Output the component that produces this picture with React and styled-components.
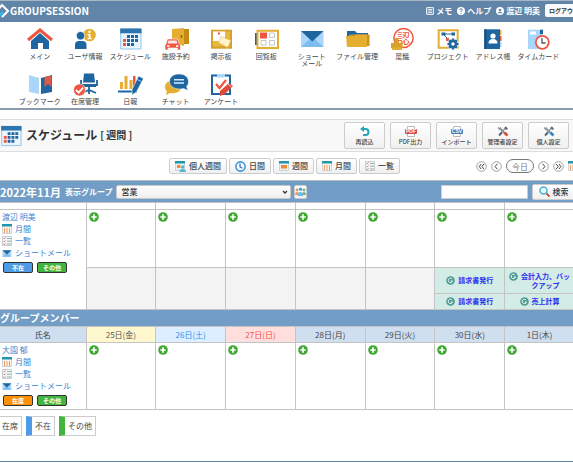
import React from "react";
import styled, { createGlobalStyle } from "styled-components";

const GlobalStyle = createGlobalStyle`
  *, *::before, *::after { box-sizing: border-box; }
  html, body { margin: 0; background: #fff; }
  body {
    overflow-x: hidden;
    color: #444;
    font-family: "Noto Sans CJK JP", "Noto Sans", sans-serif;
    font-size: 8px;
    line-height: 12px;
  }
  button, input, select { font: inherit; color: inherit; margin: 0; }
  a { text-decoration: none; color: inherit; }
  svg { display: block; flex: none; }
  h1, h2, ul { margin: 0; padding: 0; font-size: inherit; list-style: none; }
`;

const Page = styled.div`
  overflow: hidden;
  border-bottom: 1px solid #6185a8;
`;

const TopBar = styled.header`
  display: flex;
  align-items: center;
  height: 22px;
  padding: 0 4px 2px 0;
  background: #6185a8;
  border-top: 1px solid #a9b7c5;
  color: #fff;
  overflow: hidden;
`;

const Brand = styled.a`
  display: flex;
  align-items: center;
  gap: 1px;
  font-size: 10px;
  font-weight: bold;
`;

const TopLinks = styled.nav`
  display: flex;
  align-items: center;
  gap: 5px;
  margin-left: auto;
  margin-right: -14px;
  font-weight: bold;
  white-space: nowrap;
`;

const TopLink = styled.a`
  display: flex;
  align-items: center;
  gap: 2px;
`;

const Logout = styled.button`
  height: 13px;
  padding: 0 4px;
  border: 0;
  border-radius: 2px;
  background: #fafafa;
  color: #333;
  font-size: 6px;
  font-weight: bold;
`;

const Menu = styled.nav`
  display: grid;
  grid-template-columns: repeat(12, 1fr);
  grid-auto-rows: 45px;
  height: 88px;
  padding: 5px 12px 0 17px;
  border-bottom: 2px solid #8c9bab;
`;

const MenuItem = styled.a`
  display: flex;
  flex-direction: column;
  align-items: center;
  gap: 2px;
  font-size: 7px;
  line-height: 7px;
  text-align: center;
  white-space: pre;
`;

const TitleBar = styled.div`
  display: flex;
  align-items: center;
  gap: 4px;
  margin-top: 9px;
  height: 33px;
  padding-right: 4px;
  background: #f8f8f8;
  border: solid #ddd;
  border-width: 1px 0;
`;

const Title = styled.h1`
  display: flex;
  align-items: center;
  gap: 3px;
  padding-bottom: 2px;
  color: #333;
  font-size: 12px;
  line-height: 18px;
  font-weight: bold;
`;

const TitleNote = styled.small`
  font-size: 10px;
`;

const Tools = styled.div`
  display: flex;
  gap: 5px;
  margin-left: auto;
`;

const RaisedButton = styled.button`
  display: flex;
  align-items: center;
  justify-content: center;
  border: 1px solid #ccc;
  border-radius: 2px;
  background: linear-gradient(#fff, #f0f0f0);
  white-space: nowrap;
`;

const ToolButton = styled(RaisedButton)`
  flex-direction: column;
  gap: 1px;
  width: 41px;
  height: 27px;
  padding: 0;
  font-size: 6px;
  line-height: 8px;
  font-weight: 500;
`;

const ViewRow = styled.div`
  display: grid;
  grid-template-columns: 1fr auto 1fr;
  align-items: center;
  height: 28px;
  padding-right: 4px;
`;

const Views = styled.div`
  display: flex;
  grid-column: 2;
  gap: 2px;
`;

const ViewButton = styled(RaisedButton)`
  gap: 3px;
  height: 16px;
  padding: 0 5px;
  font-weight: 500;
`;

const Pager = styled.div`
  display: flex;
  align-items: center;
  justify-content: flex-end;
  gap: 4px;
  margin-right: -9px;
`;

const PlainButton = styled.button`
  display: flex;
  padding: 0;
  border: 0;
  background: none;
`;

const Today = styled.button`
  height: 14px;
  padding: 0 5px;
  border: 1px solid #777;
  border-radius: 7px;
  background: #fff;
  color: #777;
  line-height: 11px;
`;

const FilterBar = styled.div`
  display: flex;
  align-items: center;
  gap: 3px;
  height: 22px;
  background: #729dc6;
  border-top: 1px solid #b5bdc5;
  color: #fff;
  font-weight: bold;
  white-space: nowrap;
`;

const Heading = styled.h2`
  font-size: ${(p) => p.$size}px;
  line-height: 16px;
`;

const FilterLabel = styled.label`
  margin-left: 1px;
`;

const SelectBox = styled.div`
  display: grid;
  align-items: center;
  width: 175px;
  margin-left: 1px;
  svg { grid-area: 1 / 1; justify-self: end; margin-right: 3px; pointer-events: none; }
`;

const Select = styled.select`
  grid-area: 1 / 1;
  appearance: none;
  width: 100%;
  height: 14px;
  padding: 0 4px;
  border: 1px solid #c9c9c9;
  border-radius: 2px;
  background: linear-gradient(#fff, #eee);
  color: #333;
  font-size: 8px;
  line-height: 11px;
  font-weight: 500;
`;

const IconButton = styled(RaisedButton)`
  width: 13px;
  height: 14px;
  padding: 0;
`;

const SearchForm = styled.form`
  display: flex;
  align-items: center;
  gap: 4px;
  margin-left: auto;
  margin-right: -2px;
`;

const SearchInput = styled.input`
  width: 87px;
  height: 14px;
  padding: 0 3px;
  border: 1px solid #ccc;
  background: #fff;
  color: #333;
`;

const SearchButton = styled(RaisedButton)`
  gap: 3px;
  width: 43px;
  height: 16px;
  padding: 0;
  color: #333;
  font-weight: 500;
`;

const TableWrap = styled.div`
  margin-right: -2px;
`;

const Table = styled.table`
  width: 100%;
  table-layout: fixed;
  border-collapse: collapse;
`;

const NameCol = styled.col`
  width: 86px;
`;

const Cell = styled.td`
  height: ${(p) => p.$h}px;
  padding: ${(p) => (p.$h > 20 ? "2px" : "0")};
  border: 1px solid #c4c4c4;
  border-left-color: #d0d0d0;
  background: ${(p) => p.$bg || "#fff"};
  vertical-align: top;
  &:first-child { border-left: 0; }
`;

const NameCell = styled(Cell)`
  padding: 1px 2px;
`;

const EventCell = styled(Cell)`
  padding: 0;
  vertical-align: middle;
  background: #d3ece6;
`;

const GroupCell = styled.td`
  height: 17px;
  padding: 0;
  background: #729dc6;
  color: #fff;
`;

const dayTones = {
  week: ["#cfdff0", "#444"],
  fri: ["#fff8cf", "#555"],
  sat: ["#dceeff", "#2f8df2"],
  sun: ["#ffdede", "#f25050"],
};

const DayHead = styled.th`
  height: 16px;
  padding: 0;
  border: 1px solid #c4c4c4;
  background: ${(p) => dayTones[p.$tone][0]};
  color: ${(p) => dayTones[p.$tone][1]};
  font-weight: normal;
  &:first-child { border-left: 0; }
`;

const Person = styled.ul`
  color: #3a7fd0;
`;

const PersonLink = styled.a`
  display: flex;
  align-items: center;
  gap: 3px;
  height: 12px;
  white-space: nowrap;
`;

const Badges = styled.div`
  display: flex;
  gap: 4px;
  padding: 3px 1px 0;
`;

const Badge = styled.button`
  width: 30px;
  height: 11px;
  padding: 0;
  border: 1px solid #333;
  border-radius: 2px;
  background: ${(p) => p.$color};
  color: #fff;
  font-size: 6px;
  line-height: 8px;
  font-weight: bold;
`;

const EventLink = styled.a`
  display: flex;
  justify-content: center;
  align-items: flex-start;
  gap: 3px;
  color: #2a2af0;
  font-size: 7px;
  line-height: 9px;
  font-weight: bold;
  text-align: center;
  white-space: pre;
`;

const Legend = styled.ul`
  display: flex;
  gap: 4px;
  margin-top: 6px;
  margin-left: -7px;
  padding-bottom: 25px;
`;

const LegendItem = styled.li`
  display: flex;
  align-items: center;
  height: 20px;
  padding: 0 3px;
  border: 1px solid #ccc;
  border-left: 6px solid ${(p) => p.$color};
`;

const Art = ({ w = 26, h = 24, box, children }) => (
  <svg width={w} height={h} viewBox={box || `0 0 ${w} ${h}`} fill="none" aria-hidden="true">
    {children}
  </svg>
);

const BLUE = "#1f659f";
const LIGHT = "#a9d6fa";
const GOLD = "#e5ae30";
const RED = "#ef5541";

const HomeArt = () => (
  <Art>
    <path d="M4 14 13 6l9 8v8h-6v-6h-5v6H4z" fill={BLUE} />
    <path d="M1 13 13 3l12 10" stroke={RED} strokeWidth="3" />
  </Art>
);
const UserArt = () => (
  <Art>
    <circle cx="17.5" cy="8" r="6.3" fill={GOLD} />
    <circle cx="17.5" cy="4.7" r="1.2" fill="#fff" />
    <path d="M15.5 7h3v4h1.2v1.3h-4.2V11h1.2V8.3h-1.2z" fill="#fff" />
    <circle cx="8.5" cy="8.7" r="4.2" fill={BLUE} stroke="#fff" strokeWidth=".7" />
    <path d="M3 22v-4q0-4 4-4h3.500q4 0 4 4v4z" fill={BLUE} />
  </Art>
);
const CalendarArt = ({ w = 26, h = 24 }) => (
  <Art w={w} h={h} box={w === 26 ? "0 0 26 24" : "2 1 23 22"}>
    <path d="M3.700 2h20.300v20H3.700z" fill="#eaf5fe" stroke="#8fc5ef" />
    <path d="M3.200 1.500h21.300v4.800H3.200z" fill="#2d76ad" />
    <path d="M10 8h3v3h-3zm4 0h3v3h-3zm4 0h3v3h-3zm-8 4h3v3h-3zm4 0h3v3h-3zm4 0h3v3h-3zm-8 4h3v3h-3zm4 0h3v3h-3z" fill={BLUE} />
    <path d="M6 12h3v3H6zm0 4h3v3H6z" fill={RED} />
  </Art>
);
const FacilityArt = () => (
  <Art>
    <path d="M9 2h17v15H9z" fill="#c58b14" />
    <path d="M9 2l12-1v18L9 16z" fill={GOLD} />
    <path d="M18.500 8v3" stroke="#8a6415" strokeWidth="1.500" />
    <path d="M4.500 12h10l2 5 1 1v5h-3v-2H5v2H2v-5l1-1z" fill={RED} stroke="#fff" strokeWidth=".6" />
    <path d="M5.500 13.500h8l1 3h-10z" fill="#fde5e1" />
    <path d="M4 19h2.500m6.500 0h2.500" stroke="#fff" strokeWidth="1.300" />
  </Art>
);
const BoardArt = () => (
  <Art>
    <path d="M3 2.700h21v19H3z" fill="#d6a02b" />
    <path d="M5 4.500h17v15H5z" fill="#e9b93f" />
    <path d="M5 4.500h12v9.500H5z" fill="#fff" />
    <path d="m13 9.500 10 4-3.500 7-9-5z" fill="#fff5cc" stroke="#dcb352" strokeWidth=".5" />
    <path d="M10 5.500h2v2h-2z" fill={RED} />
  </Art>
);
const CircularArt = () => (
  <Art>
    <path d="M2 6h3v12H2z" fill={BLUE} />
    <path d="M4.500 3.700h20.500v17.300H4.500z" fill="#fff" stroke={GOLD} strokeWidth="2" />
    <path d="M7 5.500h7v6H7z" fill={RED} />
    <path d="M16.500 6h5v4.500h-5zm-8.500 7.500h5v4.500H8zm8.500 0h5v4.500h-5z" stroke="#c8c8c8" />
  </Art>
);
const MailArt = ({ w = 26, h = 24 }) => (
  <Art w={w} h={h} box={w === 26 ? "0 0 26 24" : "1 1 25 22"}>
    <path d="M2 4h22.500v16H2z" fill={LIGHT} />
    <path d="m2 20 9-8h4.500l9 8z" fill="#7dbdee" />
    <path d="M2 4h22.500L13.300 14.500z" fill={BLUE} />
  </Art>
);
const FolderArt = () => (
  <Art>
    <path d="M3 4h8l2 2h11v10H3z" fill={BLUE} />
    <path d="M5 7.500h20.500V19H5z" fill="#c79322" />
    <path d="M2 9h8l2-1.500h11V20H3z" fill={GOLD} />
  </Art>
);
const SealArt = () => (
  <Art>
    <circle cx="14.500" cy="11" r="9.600" stroke={RED} strokeWidth="1.500" />
    <text x="14.500" y="15.500" textAnchor="middle" fontSize="13" fill={RED}>認</text>
    <path d="M5.500 11h4v5h4v5H2v-5h3.500z" fill="#d9a126" />
    <path d="M3 20.500h10v2.500H3z" fill={GOLD} />
  </Art>
);
const gearTeeth = [0, 45, 90, 135];
const ProjectArt = () => (
  <Art>
    <path d="M3.700 3.300h19v17.500h-19z" fill="#fff" stroke={GOLD} strokeWidth="2" />
    <path d="M8 7h10M8 7l6 6" stroke={BLUE} />
    <path d="M6.500 5.500h4v3h-4zm10 0h3.500v3h-3.500z" fill={BLUE} />
    <path d="M11 11h3v3h-3z" fill={RED} />
    <circle cx="18" cy="17" r="6" fill="#fff" />
    {gearTeeth.map((a) => (
      <path key={a} d="M16.700 11.500h2.600v11h-2.600z" fill={BLUE} transform={`rotate(${a} 18 17)`} />
    ))}
    <circle cx="18" cy="17" r="4" fill={BLUE} />
    <circle cx="18" cy="17" r="1.700" fill="#fff" />
  </Art>
);
const AddressArt = () => (
  <Art>
    <path d="M19 3h2.500v5H19z" fill={GOLD} />
    <path d="M19 9h2.500v5H19z" fill={RED} />
    <path d="M19 15h2.500v5H19z" fill={LIGHT} />
    <path d="M4.300 2.300h15.700V22H4.300z" fill={BLUE} />
    <path d="M4.300 2.300h2V22h-2z" fill="#174f80" />
    <circle cx="13" cy="9" r="2.600" fill="#fff" />
    <path d="M8.500 16.500q0-4.500 4.500-4.500t4.500 4.500z" fill="#fff" />
  </Art>
);
const TimecardArt = () => (
  <Art>
    <path d="M3 2.700h15V22H3z" fill={LIGHT} />
    <path d="M5 4.500h6v3H5z" fill="#fff" />
    <path d="M15 2.700h3V7h-3z" fill={BLUE} />
    <circle cx="17.300" cy="15.300" r="6.500" fill="#fff" stroke={RED} strokeWidth="1.800" />
    <path d="M17 11v5h3.500" stroke="#555" strokeWidth="1.300" />
  </Art>
);
const BookmarkArt = () => (
  <Art>
    <path d="m2 3 10 3v16L2 20z" fill={LIGHT} />
    <path d="m25 3-11 3v16l11-2z" fill={BLUE} />
    <path d="m17.500 5 7-1.500V15l-3.500-3-3.500 3z" fill="#df5b49" />
  </Art>
);
const ChairArt = () => (
  <Art>
    <path d="M12 1.500h10l1 9H11z" fill={BLUE} />
    <path d="M9 8v5h16V8M10 14h14" stroke={BLUE} strokeWidth="1.800" />
    <path d="M17 14v8M10 21l7-3 7 3" stroke={BLUE} strokeWidth="1.800" />
    <circle cx="7.500" cy="18" r="6" fill={RED} stroke="#fff" strokeWidth=".6" />
    <path d="m4 18 2.700 2.700 4.500-5" stroke="#fff" strokeWidth="1.800" />
  </Art>
);
const ReportArt = () => (
  <Art>
    <path d="M3 10h3v7H3zm4.500-6h3v13h-3zm5 4h3v9h-3z" fill={GOLD} />
    <path d="M16 4h2.500v13H16z" fill={RED} />
    <path d="M1 19.500h19" stroke={BLUE} strokeWidth="2" />
    <path d="m21.500 4 5 2.500-7 13.500-4.500 3v-5.500z" fill={BLUE} stroke="#fff" strokeWidth=".6" />
    <path d="m20 7.500 4.500 2" stroke="#9ccaf0" />
  </Art>
);
const ChatArt = () => (
  <Art>
    <path d="M9 9c-5 0-7 3-7 6 0 2 1 4 2 4l-1 4 4-2c7 1 11-2 11-6z" fill={GOLD} />
    <path d="M16 2c6 0 9.500 3.500 9.500 7.500 0 2.500-1 4-2 5l1.500 4-4.500-2c-8 2-14-2-14-7S11 2 16 2z" fill={BLUE} stroke="#fff" strokeWidth=".5" />
    <path d="M11 7.700h10M11 11h10" stroke="#d8ecff" strokeWidth="1.500" />
  </Art>
);
const SurveyArt = () => (
  <Art>
    <path d="M4 3.500h18V22H4z" fill="#fff" stroke={BLUE} strokeWidth="2" />
    <path d="M9 2h8v3.500H9z" fill={LIGHT} />
    <path d="m8 12 3.500 4L18 8" stroke={RED} strokeWidth="2.200" />
    <path d="m12 19 9-8 4 3-8 8-5 2z" fill="#e04b38" />
    <path d="m20 12 3.500 3" stroke="#fff" strokeWidth=".7" />
  </Art>
);

const menu = [
  ["メイン", HomeArt], ["ユーザ情報", UserArt], ["スケジュール", CalendarArt],
  ["施設予約", FacilityArt], ["掲示板", BoardArt], ["回覧板", CircularArt],
  ["ショート\nメール", MailArt], ["ファイル管理", FolderArt], ["稟議", SealArt],
  ["プロジェクト", ProjectArt], ["アドレス帳", AddressArt], ["タイムカード", TimecardArt],
  ["ブックマーク", BookmarkArt], ["在席管理", ChairArt], ["日報", ReportArt],
  ["チャット", ChatArt], ["アンケート", SurveyArt],
];

const ReloadArt = () => (
  <Art w={12} h={11}>
    <path d="M3.500 3h3a3 3 0 0 1 0 6H4" stroke="#26a5b8" strokeWidth="2" />
    <path d="M1 3 5 0v6z" fill="#26a5b8" />
  </Art>
);
const DocArt = ({ color, label }) => (
  <Art w={12} h={11}>
    <path d="M2.500.5h7v10h-7z" fill="#fff" stroke="#bbb" />
    <rect y="3" width="12" height="5" rx="1" fill={color} />
    <text x="6" y="7.200" textAnchor="middle" fontSize="5" fontWeight="bold" fontFamily="Liberation Sans, sans-serif" fill="#fff">{label}</text>
  </Art>
);
const WrenchArt = ({ accent }) => (
  <Art w={12} h={11}>
    <path d="M3 2.500 9.500 9" stroke="#8a949e" strokeWidth="1.800" />
    <path d="M1 1.500 2.500 3 4 1.500M9.500 1 3 8" stroke="#8a949e" strokeWidth="1.500" />
    <path d="M7 2 9 .5 11 3 9.500 4z" fill="#667" />
    <path d="m2 9.500 3-3" stroke="#567" strokeWidth="2" />
    <path d="m7.500 6.500 3 3" stroke={accent} strokeWidth="2.500" />
  </Art>
);

const tools = [
  ["再読込", <ReloadArt />],
  ["PDF出力", <DocArt color="#d9434a" label="PDF" />],
  ["インポート", <DocArt color="#3f7dbb" label="CSV" />],
  ["管理者設定", <WrenchArt accent="#e5482d" />],
  ["個人設定", <WrenchArt accent="#2d87d8" />],
];

const MonthArt = () => (
  <Art w={10} h={10}>
    <path d="M.5.500h9v9h-9z" fill="#fff5ec" stroke="#c9d5db" />
    <path d="M0 0h10v2.500H0z" fill="#2296ad" />
    <path d="M2.500 4v5M5 4v5M7.500 4v5" stroke="#ee9c62" />
  </Art>
);
const WeekArt = () => (
  <Art w={10} h={10}>
    <path d="M.5.500h9v9h-9z" fill="#e8f2f6" stroke="#c9d5db" />
    <path d="M0 0h10v2.500H0z" fill="#2296ad" />
    <path d="M2 4h6v3.500H2z" fill="#f28a35" />
  </Art>
);
const PersonWeekArt = () => (
  <Art w={11} h={11}>
    <path d="M.5.500h9v9h-9z" fill="#e8f2f6" stroke="#c9d5db" />
    <path d="M0 0h10v2.500H0z" fill="#2296ad" />
    <path d="M2 4h3.500v3H2z" fill="#f28a35" />
    <circle cx="7.700" cy="6" r="1.700" fill="#56b3d3" />
    <path d="M4.500 11q0-3 3.200-3T11 11z" fill="#56b3d3" />
  </Art>
);
const ClockArt = () => (
  <Art w={11} h={11}>
    <circle cx="5.500" cy="5.500" r="4.600" fill="#fff" stroke="#3d93e0" strokeWidth="1.600" />
    <path d="M5 2.500v3.300l2.300 1.500" stroke="#3d6a9a" strokeWidth="1.200" />
  </Art>
);
const ListArt = () => (
  <Art w={10} h={10}>
    <path d="M.5.500h9v9h-9z" fill="#f3f6f7" stroke="#c5cfd3" />
    <path d="m1.500 2 .8.8L3.500 1.500M1.500 5l.8.8 1.200-1.300M1.500 8l.8.600L3.500 7.500" stroke="#e66553" />
    <path d="M5 2.500h4M5 5.200h4M5 8h4" stroke="#8fb0b0" />
  </Art>
);

const views = [
  ["個人週間", PersonWeekArt], ["日間", ClockArt], ["週間", WeekArt],
  ["月間", MonthArt], ["一覧", ListArt],
];

const arrows = {
  first: "M5.200 3 3.200 5.500l2 2.500M8 3 6 5.500 8 8",
  prev: "M6.500 2.700 4 5.500l2.500 2.800",
  next: "M4.500 2.700 7 5.500 4.500 8.300",
  last: "M3.200 3l2 2.500-2 2.500M6 3l2 2.500L6 8",
};
const PageArrow = ({ kind, label }) => (
  <PlainButton type="button" aria-label={label}>
    <Art w={11} h={11}>
      <circle cx="5.500" cy="5.500" r="4.800" stroke="#8a8a8a" strokeWidth=".8" />
      <path d={arrows[kind]} stroke="#444" />
    </Art>
  </PlainButton>
);

const PeopleArt = () => (
  <Art w={11} h={9}>
    <circle cx="2" cy="3" r="1.400" fill="#e99a5b" />
    <path d="M0 8q0-3 2-3t2 3z" fill="#e99a5b" />
    <circle cx="9" cy="3" r="1.400" fill="#6fb58d" />
    <path d="M7 8q0-3 2-3t2 3z" fill="#6fb58d" />
    <circle cx="5.500" cy="2.300" r="1.800" fill="#4ea6cf" />
    <path d="M2.800 9q0-4 2.700-4t2.700 4z" fill="#6fbbe0" />
  </Art>
);

const AddButton = () => (
  <PlainButton type="button" aria-label="予定を追加">
    <Art w={10} h={10}>
      <circle cx="5" cy="5" r="4.800" fill="#41a833" />
      <path d="M5 2.300v5.400M2.300 5h5.400" stroke="#fff" strokeWidth="1.700" />
    </Art>
  </PlainButton>
);

const EventItem = ({ children }) => (
  <EventLink href="#">
    <Art w={9} h={9}>
      <circle cx="4.500" cy="4.500" r="4.300" fill="#4b9c93" />
      <path d="M6.200 3.200A2.200 2.200 0 1 0 6.500 5H4.700" stroke="#fff" />
    </Art>
    {children}
  </EventLink>
);

const PersonCard = ({ name, status, color }) => (
  <>
    <Person>
      <li><PersonLink href="#">{name}</PersonLink></li>
      <li><PersonLink href="#"><MonthArt />月間</PersonLink></li>
      <li><PersonLink href="#"><ListArt />一覧</PersonLink></li>
      <li><PersonLink href="#"><MailArt w={10} h={9} />ショートメール</PersonLink></li>
    </Person>
    <Badges>
      <Badge type="button" $color={color}>{status}</Badge>
      <Badge type="button" $color="#43b53f">その他</Badge>
    </Badges>
  </>
);

const days = [
  ["25日(金)", "fri"], ["26日(土)", "sat"], ["27日(日)", "sun"], ["28日(月)", "week"],
  ["29日(火)", "week"], ["30日(水)", "week"], ["1日(木)", "week"],
];

export default function App() {
  return (
    <Page>
      <GlobalStyle />
      <TopBar>
        <Brand href="#">
          <Art w={9} h={16}>
            <path d="M-3 8 2 2l6 6-6 6" stroke="#fff" strokeWidth="2" />
            <path d="m-1 11 3-3 2 2-4 4z" fill="#34b4f4" />
          </Art>
          GROUPSESSION
        </Brand>
        <TopLinks>
          <TopLink href="#">
            <Art w={8} h={8}>
              <path d="M.7.700h6.600v6.600H.7z" stroke="#fff" />
              <path d="M2 2.500h4M2 4h4M2 5.500h4" stroke="#fff" strokeWidth=".8" />
            </Art>
            メモ
          </TopLink>
          <TopLink href="#">
            <Art w={8} h={8}>
              <circle cx="4" cy="4" r="4" fill="#fff" />
              <path d="M2.700 3q0-1.300 1.300-1.300T5.300 3Q5.300 3.700 4 4.300v.7M4 5.700v1" stroke="#6185a8" />
            </Art>
            ヘルプ
          </TopLink>
          <TopLink href="#">
            <Art w={8} h={8}>
              <circle cx="4" cy="4" r="4" fill="#fff" />
              <circle cx="4" cy="3" r="1.300" fill="#6185a8" />
              <path d="M1.700 6.300q0-1.500 2.300-1.500t2.300 1.500z" fill="#6185a8" />
            </Art>
            渡辺 明美
          </TopLink>
          <Logout type="button">ログアウト</Logout>
        </TopLinks>
      </TopBar>

      <Menu>
        {menu.map(([label, Icon]) => (
          <MenuItem href="#" key={label}><Icon />{label}</MenuItem>
        ))}
      </Menu>

      <TitleBar>
        <CalendarArt w={22} h={22} />
        <Title>スケジュール<TitleNote>[ 週間 ]</TitleNote></Title>
        <Tools>
          {tools.map(([label, icon]) => (
            <ToolButton type="button" key={label}>{icon}{label}</ToolButton>
          ))}
        </Tools>
      </TitleBar>

      <ViewRow>
        <Views>
          {views.map(([label, Icon]) => (
            <ViewButton type="button" key={label}><Icon />{label}</ViewButton>
          ))}
        </Views>
        <Pager>
          <PageArrow kind="first" label="前週" />
          <PageArrow kind="prev" label="前日" />
          <Today type="button">今日</Today>
          <PageArrow kind="next" label="翌日" />
          <PageArrow kind="last" label="翌週" />
          <PlainButton type="button" aria-label="カレンダー"><MonthArt /></PlainButton>
        </Pager>
      </ViewRow>

      <FilterBar>
        <Heading $size={11}>2022年11月</Heading>
        <FilterLabel htmlFor="group">表示グループ</FilterLabel>
        <SelectBox>
          <Select id="group" defaultValue="営業"><option>営業</option></Select>
          <Art w={6} h={6}><path d="m1 2 2 2 2-2" stroke="#333" strokeWidth="1.300" /></Art>
        </SelectBox>
        <IconButton type="button" aria-label="グループ選択"><PeopleArt /></IconButton>
        <SearchForm>
          <SearchInput aria-label="検索キーワード" />
          <SearchButton type="button">
            <Art w={11} h={11}>
              <circle cx="4.500" cy="4.500" r="3.500" fill="#e8f8fc" stroke="#4cb2cc" strokeWidth="1.500" />
              <path d="m7.500 7.500 3 3" stroke="#c04a30" strokeWidth="1.800" />
            </Art>
            検索
          </SearchButton>
        </SearchForm>
      </FilterBar>

      <TableWrap>
        <Table>
          <colgroup>
            <NameCol />
            {days.map(([d]) => <col key={d} />)}
          </colgroup>
          <tbody>
            <tr>
              <Cell $h={7} />
              {days.map(([d]) => <Cell $h={7} key={d} />)}
            </tr>
            <tr>
              <NameCell $h={100} rowSpan={3}>
                <PersonCard name="渡辺 明美" status="不在" color="#4f9be8" />
              </NameCell>
              {days.map(([d]) => <Cell $h={58} key={d}><AddButton /></Cell>)}
            </tr>
            <tr>
              {days.slice(0, 5).map(([d]) => <Cell $h={42} $bg="#f3f3f3" rowSpan={2} key={d} />)}
              <EventCell $h={26}><EventItem>請求書発行</EventItem></EventCell>
              <EventCell $h={26}><EventItem>{"会計入力、バッ\nクアップ"}</EventItem></EventCell>
            </tr>
            <tr>
              <EventCell $h={16}><EventItem>請求書発行</EventItem></EventCell>
              <EventCell $h={16}><EventItem>売上計算</EventItem></EventCell>
            </tr>
            <tr>
              <GroupCell colSpan={8}><Heading $size={10}>グループメンバー</Heading></GroupCell>
            </tr>
            <tr>
              <DayHead $tone="week">氏名</DayHead>
              {days.map(([d, tone]) => <DayHead $tone={tone} key={d}>{d}</DayHead>)}
            </tr>
            <tr>
              <NameCell $h={67}>
                <PersonCard name="大園 郁" status="在席" color="#ff9207" />
              </NameCell>
              {days.map(([d]) => <Cell $h={67} key={d}><AddButton /></Cell>)}
            </tr>
          </tbody>
        </Table>
      </TableWrap>

      <Legend>
        <LegendItem $color="#ff9207">在席</LegendItem>
        <LegendItem $color="#4f9be8">不在</LegendItem>
        <LegendItem $color="#43b53f">その他</LegendItem>
      </Legend>
    </Page>
  );
}
